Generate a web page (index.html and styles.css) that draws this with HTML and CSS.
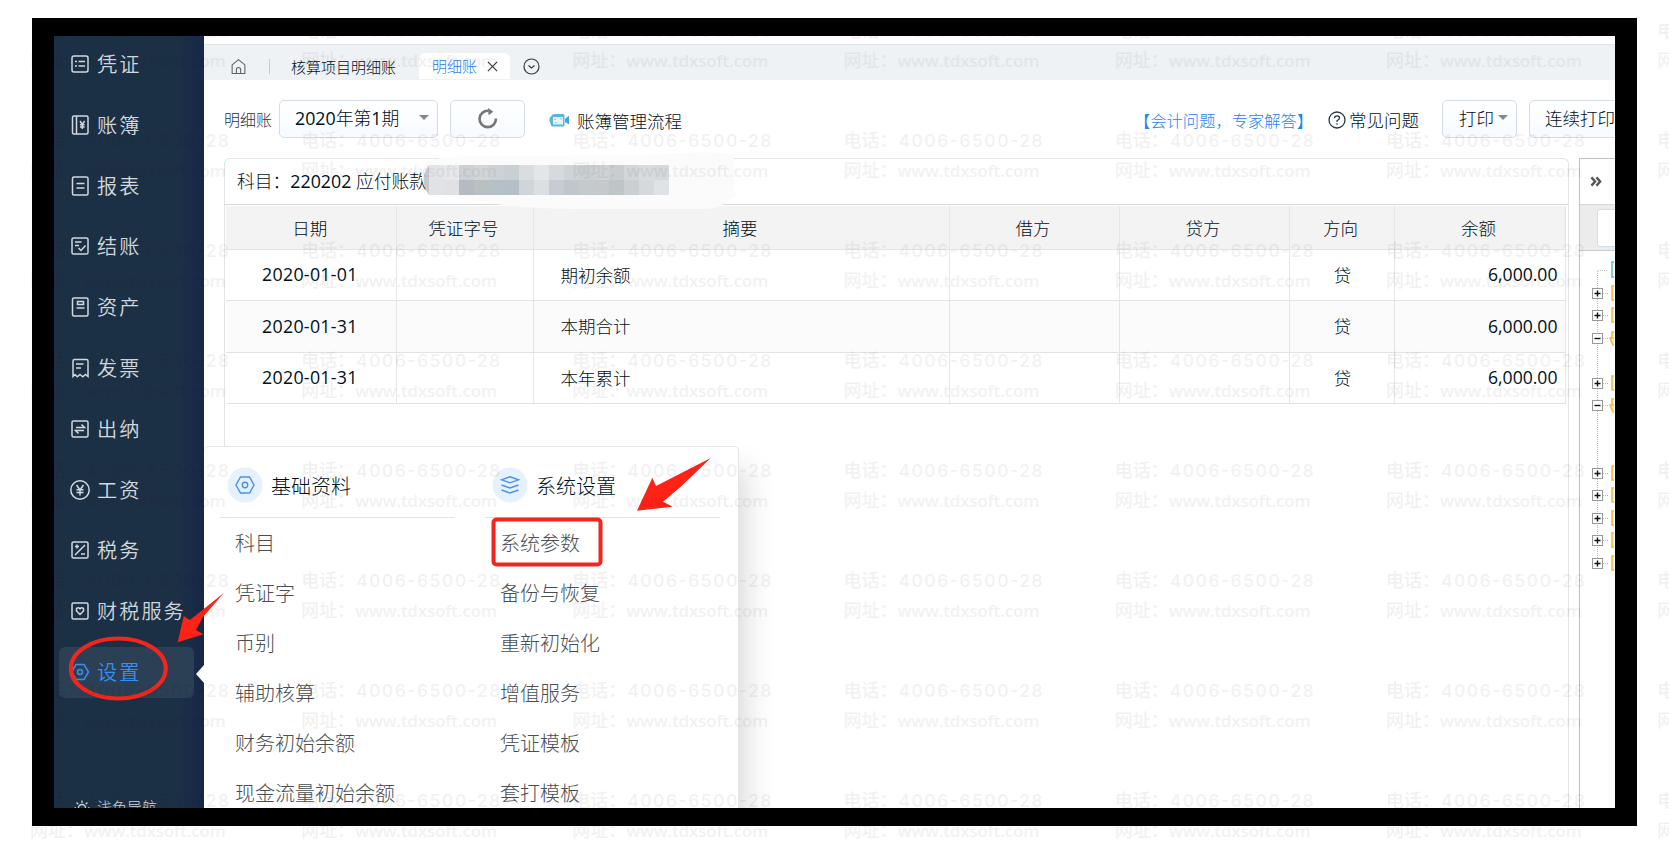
FILE: index.html
```html
<!DOCTYPE html>
<html lang="zh-CN">
<head>
    <meta charset="UTF-8">
    <meta name="viewport" content="width=device-width, initial-scale=1.0">
    <title>明细账</title>
    <link rel="stylesheet" href="styles.css">
</head>
<body>
    <div class="frame">
        <nav class="sidebar">
            <a class="nav-item">
                <svg class="nav-icon" viewBox="0 0 20 20"><rect x="2" y="2" width="16" height="16" rx="2"/><path d="M5 7.500h2M5 12h2M8.500 7.500H15M8.500 12H15"/></svg>
                <span>凭证</span>
            </a>
            <a class="nav-item">
                <svg class="nav-icon" viewBox="0 0 20 20"><rect x="2.500" y="1" width="15.500" height="18" rx="1.500"/><path d="M6.500 1v18M10 6l2.300 3.500L14.600 6M12.300 9.500V14M10 9.800h4.600M10 12h4.600"/></svg>
                <span>账簿</span>
            </a>
            <a class="nav-item">
                <svg class="nav-icon" viewBox="0 0 20 20"><rect x="2.500" y="1" width="15.500" height="18" rx="1.500"/><path d="M6.500 7.500h8M6.500 12h8"/></svg>
                <span>报表</span>
            </a>
            <a class="nav-item">
                <svg class="nav-icon" viewBox="0 0 20 20"><rect x="2" y="2" width="16" height="16" rx="1.500"/><path d="M5 6h6.500M5 9.500h4M8.500 12l2.500 2.500 4.500-5"/></svg>
                <span>结账</span>
            </a>
            <a class="nav-item">
                <svg class="nav-icon" viewBox="0 0 20 20"><rect x="2.500" y="1" width="15.500" height="18" rx="1.500"/><path d="M7.500 4.500h6v3h-6zM6.500 11h8"/></svg>
                <span>资产</span>
            </a>
            <a class="nav-item">
                <svg class="nav-icon" viewBox="0 0 20 20"><path d="M3.500 1.500h13q1.500 0 1.500 1.500v15.500l-2.500-2-2.700 2.300-2.800-2.300-2.700 2.300-2.300-2.300-2 2V3q0-1.500 1.500-1.500zM6 6h7.500M6 10h5"/></svg>
                <span>发票</span>
            </a>
            <a class="nav-item">
                <svg class="nav-icon" viewBox="0 0 20 20"><rect x="2" y="2" width="16" height="16" rx="1.500"/><path d="M6 8.500h8.500L11.500 5.500M14 11.500H5.500l3 3"/></svg>
                <span>出纳</span>
            </a>
            <a class="nav-item">
                <svg class="nav-icon" viewBox="0 0 20 20"><circle cx="10" cy="10" r="9.200"/><path d="M6.500 5l3.500 5 3.500-5M10 10v5.500M6.500 9.800h7M6.500 12.500h7"/></svg>
                <span>工资</span>
            </a>
            <a class="nav-item">
                <svg class="nav-icon" viewBox="0 0 20 20"><rect x="2" y="2" width="16" height="16" rx="1.500"/><path d="M5 15L15 5M5 6.500h4M7 4.500v4M11 14h4"/></svg>
                <span>税务</span>
            </a>
            <a class="nav-item">
                <svg class="nav-icon" viewBox="0 0 20 20"><rect x="2" y="2" width="16" height="16" rx="1.500"/><path d="M10 13.500L6.500 10V7.500q1.700-1.500 3.500.3 1.800-1.800 3.500-.3V10z"/></svg>
                <span>财税服务</span>
            </a>
            <a class="nav-item active">
                <svg class="nav-icon" viewBox="0 0 20 20"><path d="M6 2.500h8l4.500 7.500-4.500 7.500H6L1.500 10z"/><circle cx="10" cy="10" r="2.500"/></svg>
                <span>设置</span>
            </a>
            <a class="theme-switch">
                <svg class="sun" viewBox="0 0 16 16"><circle cx="8" cy="9" r="3.500"/><path d="M8 1.500V4M2.500 3.500l1.800 1.800M13.500 3.500l-1.800 1.800M.5 9H2M14 9h1.500"/></svg>
                <span>浅色导航</span>
            </a>
        </nav>

        <main class="main">
            <div class="tabs">
                <svg class="home" viewBox="0 0 16 16"><path d="M2 6.500L8 1.500l6 5V14.500H2zM6 14.500V11q0-2 2-2t2 2v3.500"/></svg>
                <i class="tab-sep"></i>
                <span class="tab">核算项目明细账</span>
                <span class="tab current">明细账
                    <svg class="close" viewBox="0 0 10 10"><path d="M.8.800l8.400 8.400M9.200.800L.8 9.200"/></svg>
                </span>
                <svg class="more" viewBox="0 0 17 17"><circle cx="8.500" cy="8.500" r="7.500"/><path d="M5.500 7.500l3 2.500 3-2.500"/></svg>
            </div>

            <div class="toolbar">
                <span class="toolbar-title">明细账</span>
                <div class="btn period"><span><b>2020</b>年第<b>1</b>期</span><i class="caret"></i></div>
                <div class="btn refresh">
                    <svg viewBox="0 0 20 20"><path class="ring" d="M11 2.700A7.800 7.800 0 1 0 18 10"/><path class="head" d="M10.500 0l5 3.500-4.500 3.500z"/></svg>
                </div>
                <a class="flow">
                    <svg class="camera" viewBox="0 0 20 14"><path d="M2 3.500Q3 .5 6 1h8q1.500.2 1.500 2v9q0 1.500-1.500 1.500H3.500Q2 13.500 2 12L.5 8V5z" fill="#5bb5dc"/><path d="M4 4h10v7.500H4z" fill="#e3f4fb"/><path d="M16 6l4-3.500v9L16 9z" fill="#45a7d3"/><path d="M5.500 6.500h1.500M11 6h1.500M6 9.500h1.500" stroke="#7cc3e2"/></svg>
                    账簿管理流程
                </a>
                <a class="expert">【会计问题，专家解答】</a>
                <a class="faq">
                    <svg viewBox="0 0 18 18"><circle cx="9" cy="9" r="8"/><path d="M6.500 7.200Q6.500 4.800 9 4.800t2.500 2.200Q11.500 8.300 9 9.700v1.200M9 12.300v1.500"/></svg>常见问题
                </a>
                <div class="btn print">打印<i class="caret"></i></div>
                <div class="btn print-all">连续打印</div>
            </div>

            <div class="content">
                <section class="ledger">
                    <div class="subject">科目：<b>220202</b> 应付账款</div>
                    <table>
                        <colgroup>
                            <col class="c-date"><col class="c-no"><col class="c-summary"><col class="c-money"><col class="c-money"><col class="c-dir"><col class="c-balance">
                        </colgroup>
                        <thead>
                            <tr><th>日期</th><th>凭证字号</th><th>摘要</th><th>借方</th><th>贷方</th><th>方向</th><th>余额</th></tr>
                        </thead>
                        <tbody>
                            <tr><td class="date">2020-01-01</td><td></td><td class="summary">期初余额</td><td></td><td></td><td class="dir">贷</td><td class="num">6,000.00</td></tr>
                            <tr><td class="date">2020-01-31</td><td></td><td class="summary">本期合计</td><td></td><td></td><td class="dir">贷</td><td class="num">6,000.00</td></tr>
                            <tr><td class="date">2020-01-31</td><td></td><td class="summary">本年累计</td><td></td><td></td><td class="dir">贷</td><td class="num">6,000.00</td></tr>
                        </tbody>
                    </table>
                    <svg class="mosaic" viewBox="0 0 325 62">
                        <path d="M3 12Q8 4 60 4L225 3Q300-2 312 3V40Q318 43 308 48L300 53Q294 57 280 57H150Q90 56 65 50L20 44Q0 34 0 27 0 18 3 12z" fill="#fbfbfb"/>
                        <path d="M7 13Q-4 28 7 43z" fill="#c5c9ce"/>
                        <g id="cells"></g>
                    </svg>
                </section>

                <aside class="tree-panel">
                    <div class="tree-head"><svg viewBox="0 0 12 12"><path d="M1 1.500L5 6 1 10.500M6.500 1.500L10.500 6l-4 4.500"/></svg></div>
                    <div class="tree-search"><div class="search-box"></div></div>
                    <svg class="tree" id="tree" viewBox="0 0 34 340"></svg>
                </aside>
            </div>
        </main>

        <div class="flyout">
            <div class="flyout-col">
                <h3>
                    <svg class="round" viewBox="0 0 36 36"><circle class="disc" cx="18" cy="18" r="17.500"/><path d="M13.500 10h9l4.500 8-4.500 8h-9L9 18z"/><circle cx="18" cy="18" r="2.700"/></svg>
                    基础资料
                </h3>
                <ul><li>科目</li><li>凭证字</li><li>币别</li><li>辅助核算</li><li>财务初始余额</li><li>现金流量初始余额</li></ul>
            </div>
            <div class="flyout-col">
                <h3>
                    <svg class="round" viewBox="0 0 36 36"><circle class="disc" cx="18" cy="18" r="17.500"/><path d="M9.500 12.800l8.500-3 8.500 3-8.500 3zM9.500 18l8.500 3 8.500-3M9.500 23l8.500 3 8.500-3"/></svg>
                    系统设置
                </h3>
                <ul><li>系统参数</li><li>备份与恢复</li><li>重新初始化</li><li>增值服务</li><li>凭证模板</li><li>套打模板</li></ul>
            </div>
        </div>
        <i class="notch"></i>
    </div>

    <svg class="marks" viewBox="0 0 1669 844">
        <ellipse cx="118.300" cy="668.500" rx="47.500" ry="30"/>
        <rect x="493.500" y="519.500" width="107" height="45" rx="3"/>
        <path d="M224 592.700L203 617 196 630l7.500 4.300-25.800 8 6-26.300 6.300 4z"/>
        <path d="M710.700 458L681 486.500l-18 15.200 9.700 5-35.700 4 15.300-33 3.700 8.300z"/>
    </svg>

    <svg class="watermark" viewBox="0 0 1669 844">
        <defs>
            <pattern id="wm" x="30" y="15" width="271.200" height="110" patternUnits="userSpaceOnUse">
                <text x="0" y="22" textLength="54">电话：</text>
                <text class="phone" x="55" y="22" textLength="144">4006-6500-28</text>
                <text x="0" y="52" textLength="54">网址：</text>
                <text class="site" x="54" y="52" textLength="142">www.tdxsoft.com</text>
            </pattern>
        </defs>
        <rect x="30" y="24" width="1639" height="820" fill="url(#wm)"/>
    </svg>

    <script src="script.js"></script>
</body>
</html>
```
FILE: styles.css
```css
* {
    box-sizing: border-box;
}

body {
    margin: 0;
    width: 1669px;
    height: 844px;
    overflow: hidden;
    position: relative;
    background: #fff;
    color: #001020;
    font-family: "Open Sans", "Noto Sans CJK SC", sans-serif;
    font-size: 17.5px;
    font-weight: 300;
}

b {
    font-weight: 400;
}

svg {
    flex: none;
    fill: none;
}

.frame {
    position: relative;
    display: flex;
    width: 1605px;
    height: 808px;
    margin: 18px 0 0 32px;
    border: 18px solid #000;
    border-width: 18px 22px;
    overflow: hidden;
    background: #fff;
}

/* 左侧导航 */
.sidebar {
    flex: none;
    display: flex;
    flex-direction: column;
    gap: 9.8px;
    width: 150px;
    padding: 3px 10px 0 5px;
    background: linear-gradient(90deg, #1c3045 0, #1c3045 122px, #17284a 150px, #13213e);
}

.nav-item {
    flex: none;
    display: flex;
    align-items: center;
    height: 51px;
    padding: 0 0 1px 11px;
    border-radius: 6px;
    color: #d2d8de;
    font-size: 20.2px;
    font-weight: 350;
    letter-spacing: 2px;
    white-space: nowrap;
}

.nav-item span {
    margin: -1px 0 0 7px;
}

.nav-item.active {
    background: #2b4055;
    color: #3a8ff0;
}

.nav-icon {
    width: 20px;
    height: 20px;
    stroke: currentColor;
    stroke-width: 1.5;
}

.theme-switch {
    flex: none;
    display: flex;
    align-items: center;
    margin-top: 87px;
    padding-left: 15px;
    height: 24px;
    color: #ced4da;
    font-size: 15px;
}

.theme-switch span {
    margin-left: 7px;
}

.sun {
    width: 16px;
    height: 16px;
    stroke: currentColor;
    stroke-width: 1.3;
}

.main {
    flex: none;
    width: 1411px;
    padding-top: 8px;
    overflow: hidden;
}

.tabs {
    display: flex;
    align-items: flex-end;
    height: 36px;
    padding: 0 0 1px 26px;
    border-top: 1px solid #e0e4e8;
    background: #eef2f5;
    font-size: 15px;
}

.home {
    width: 17px;
    height: 17px;
    margin-bottom: 4px;
    stroke: #59636c;
}

.tab-sep {
    width: 1px;
    height: 15px;
    margin: 0 21px 5px 22px;
    background: #c5cacf;
}

.tab {
    height: 26px;
    line-height: 28px;
}

.tab.current {
    display: flex;
    align-items: center;
    width: 91px;
    margin-left: 23px;
    padding-left: 13px;
    border-radius: 6px 6px 0 0;
    background: #fff;
    color: #2f7cf0;
}

.close {
    width: 11px;
    height: 11px;
    margin-left: 10px;
    stroke: #333;
}

.more {
    width: 17px;
    height: 17px;
    margin: 0 0 4px 13px;
    stroke: #333d47;
    stroke-width: 1.2;
}

/* 工具栏 */
.toolbar {
    display: flex;
    align-items: center;
    height: 78px;
    padding: 0 0 1px 20px;
    white-space: nowrap;
}

.toolbar > * {
    flex: none;
}

.toolbar-title {
    width: 55px;
    font-size: 16px;
    color: #28323c;
}

.btn {
    display: flex;
    align-items: center;
    height: 38px;
    padding-bottom: 3px;
    border: 1px solid #d3dde8;
    border-radius: 5px;
    background: linear-gradient(#fff, #f7fbff);
}

.caret {
    border: 5px solid transparent;
    border-top-color: #888;
    border-bottom: 0;
}

.period {
    width: 159px;
    padding-left: 15px;
    font-size: 17.8px;
}

.period .caret {
    margin-left: 20px;
}

.refresh {
    justify-content: center;
    width: 75px;
    margin-left: 12px;
    padding-bottom: 1px;
}

.refresh svg {
    width: 21px;
    height: 21px;
}

.ring {
    stroke: #777;
    stroke-width: 2.5;
}

.head {
    fill: #777;
}

.flow {
    display: flex;
    align-items: center;
    width: 585px;
    margin: 3px 0 0 24px;
}

.camera {
    width: 20px;
    height: 14px;
    margin-right: 8px;
}

.expert {
    width: 194px;
    margin-top: 3px;
    font-size: 16.3px;
    color: #2585f5;
}

.faq {
    display: flex;
    align-items: center;
    width: 114px;
    margin-top: 2px;
}

.faq svg {
    width: 18px;
    height: 18px;
    margin-right: 3px;
    stroke: #2a3641;
    stroke-width: 1.3;
}

.print {
    width: 75px;
    padding-left: 16px;
}

.print .caret {
    margin-left: 4px;
}

.print-all {
    width: 120px;
    margin-left: 12px;
    padding-left: 15px;
}

/* 明细账 */
.content {
    display: flex;
    height: 660px;
    padding-left: 20px;
}

.ledger {
    position: relative;
    flex: none;
    width: 1345px;
    border: 1px solid #e2e4e7;
    border-bottom: 0;
    border-radius: 6px 6px 0 0;
}

.subject {
    height: 46px;
    padding-left: 12px;
    border-bottom: 1px solid #d5d8db;
    line-height: 44px;
    font-size: 17.8px;
}

table {
    width: 1339px;
    margin: 1px 0 0 1px;
    table-layout: fixed;
    border-collapse: collapse;
}

.c-date { width: 170px; }
.c-no { width: 137px; }
.c-summary { width: 416px; }
.c-money { width: 170px; }
.c-dir { width: 105px; }
.c-balance { width: 171px; }

th {
    height: 43px;
    padding: 0 2px 0 0;
    border-right: 1px solid #e6e6e6;
    border-bottom: 1px solid #e3e3e3;
    background: #f3f3f3;
    font-weight: 300;
}

td {
    height: 51.500px;
    padding: 0 0 1px;
    border-right: 1px solid #e6e6e6;
    border-bottom: 1px solid #e3e3e3;
}

tbody tr:nth-child(2) {
    background: #fbfbfb;
}

.date {
    padding-left: 36px;
    font-size: 17.8px;
    font-weight: 400;
    letter-spacing: .3px;
}

.summary {
    padding-left: 27px;
}

.dir {
    padding-left: 2px;
    text-align: center;
}

.num {
    padding-right: 7px;
    text-align: right;
    font-size: 17.6px;
    font-weight: 400;
}

.mosaic {
    position: absolute;
    left: 197px;
    top: -7px;
    width: 325px;
    height: 62px;
}

/* 科目树 */
.tree-panel {
    flex: none;
    width: 80px;
    margin-left: 10px;
    border: 1px solid #bfc1c4;
    border-right: 0;
    border-bottom: 0;
}

.tree-head {
    display: flex;
    align-items: center;
    height: 46px;
    padding-left: 10px;
    border-bottom: 1px solid #d5d8db;
}

.tree-head svg {
    width: 12px;
    height: 11px;
    stroke: #555;
    stroke-width: 2.6;
}

.tree-search {
    height: 46px;
    padding: 4px 0 0 17px;
    border-bottom: 1px solid #ccc;
    background: #ececec;
}

.search-box {
    height: 38px;
    border: 1px solid #d3dde8;
    border-radius: 3px;
    background: #fff;
}

.tree {
    display: block;
    width: 34px;
    height: 340px;
}

/* 设置菜单 */
.flyout {
    position: absolute;
    left: 150px;
    top: 410px;
    display: flex;
    gap: 30px;
    width: 535px;
    height: 400px;
    padding: 0 0 0 16px;
    border: 1px solid #e2e5e8;
    border-left: 0;
    border-radius: 5px;
    background: #fff;
    box-shadow: 14px 16px 28px -6px rgba(0, 0, 0, .14);
}

.flyout-col {
    width: 235px;
}

.flyout h3 {
    display: flex;
    align-items: center;
    height: 71px;
    margin: 0;
    padding: 6px 0 0 7px;
    border-bottom: 1px solid #e2e4e6;
    font-size: 20px;
    font-weight: 300;
}

.round {
    width: 36px;
    height: 36px;
    margin-right: 8px;
    stroke: #4a90f0;
    stroke-width: 1.4;
}

.disc {
    fill: #e6f1fe;
    stroke: none;
}

.flyout ul {
    margin: 0;
    padding: 1px 0 0 15px;
    list-style: none;
}

.flyout li {
    height: 50px;
    line-height: 50px;
    font-size: 20px;
    color: #484e54;
}

.notch {
    position: absolute;
    left: 142px;
    top: 629px;
    border: 9px solid transparent;
    border-right: 8px solid #fff;
    border-left: 0;
}

/* 标注与水印 */
.marks,
.watermark {
    position: absolute;
    left: 0;
    top: 0;
    width: 1669px;
    height: 844px;
}

.marks ellipse,
.marks rect {
    stroke: #f2261c;
    stroke-width: 4;
}

.marks path {
    fill: #ff2216;
}

.watermark text {
    fill: #000;
    fill-opacity: .06;
    font-family: "Noto Sans CJK SC", sans-serif;
    font-size: 18px;
    font-weight: 500;
}

.watermark .phone {
    font-family: Inter, sans-serif;
    font-size: 17.5px;
}

.watermark .site {
    font-family: "Open Sans", sans-serif;
    font-size: 17px;
    font-weight: 600;
}
```
FILE: script.js
```js
const NS = 'http://www.w3.org/2000/svg';

function add(parent, tag, attrs) {
    const el = document.createElementNS(NS, tag);
    for (const key in attrs) el.setAttribute(key, attrs[key]);
    parent.appendChild(el);
}

// 打码色块，每格 15px
const rows = [
    'e2e4e7 e7e8ea cdd1d5 d2d6d9 ccd2d6 c9d0d4 d9dde0 e3e6e9 d6dadd cfd4d7 cbd0d3 cfd3d6 c9cdd0 d3d6d8 d9dcdf d6d9dc',
    'e0e3e6 dfe1e2 b6bbc1 b9c0c0 b6c0c8 b5bfc7 d0d5d9 dbdfe2 c6ccd1 c0c7cb c4cacd c3c9cd bec5c6 c9cfd3 d5d9de dfe2e6'
];
const cells = document.getElementById('cells');
rows.forEach((row, j) => row.split(' ').forEach((color, i) => {
    add(cells, 'rect', { x: 7 + i * 15, y: 13 + j * 15, width: 15, height: 15, fill: '#' + color });
}));

// 科目树节点
const tree = document.getElementById('tree');
const nodes = [[42, '+'], [64, '+'], [87, '-'], [132, '+'], [154, '-'], [222, '+'], [244, '+'], [267, '+'], [289, '+'], [312, '+']];
add(tree, 'path', { d: 'M27 19.500H17.500V312', stroke: '#bbb', 'stroke-dasharray': '1 1' });
add(tree, 'rect', { x: 32, y: 11, width: 14, height: 15, stroke: '#5bbbd8', 'stroke-width': 1.5 });
nodes.forEach(([y, sign]) => {
    add(tree, 'path', { d: `M23 ${y + .5}h6`, stroke: '#bbb', 'stroke-dasharray': '1 1' });
    add(tree, 'rect', { x: 12.5, y: y - 4.5, width: 10, height: 10, fill: '#fff', stroke: '#999' });
    add(tree, 'path', { d: `M14.500 ${y + .5}h6` + (sign === '+' ? `M17.500 ${y - 2.5}v6` : ''), stroke: '#111', 'stroke-width': 1.4 });
    if (sign === '+') {
        add(tree, 'rect', { x: 32, y: y - 7, width: 14, height: 14, fill: '#ffe9a8', stroke: '#efb93e', 'stroke-width': 1.5 });
    } else {
        add(tree, 'path', { d: `M32 ${y}V${y - 6}h6M30 ${y}h10v7h-7z`, fill: '#ffe9a8', stroke: '#efb93e', 'stroke-width': 1.5 });
    }
});
```
